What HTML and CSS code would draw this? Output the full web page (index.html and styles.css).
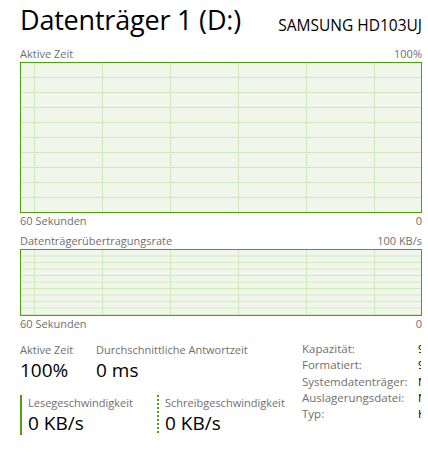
FILE: index.html
```html
<!DOCTYPE html>
<html lang="de">

<head>
    <meta charset="UTF-8">
    <meta name="viewport" content="width=device-width, initial-scale=1.0">
    <title>Datenträger 1 (D:)</title>

    <link rel="stylesheet" href="styles.css">
</head>

<body>
    <div class="disk-panel">
        <div class="header">
            <h1>Datenträger 1 (D:)</h1>
            <span class="model">SAMSUNG HD103UJ</span>
        </div>

        <div class="axis axis-top">
            <span>Aktive Zeit</span>
            <span>100%</span>
        </div>
        <div class="chart chart-active"></div>
        <div class="axis">
            <span>60 Sekunden</span>
            <span>0</span>
        </div>

        <div class="axis axis-top axis-rate">
            <span>Datenträgerübertragungsrate</span>
            <span>100 KB/s</span>
        </div>
        <div class="chart chart-rate"></div>
        <div class="axis">
            <span>60 Sekunden</span>
            <span>0</span>
        </div>

        <div class="stats">
            <div class="live">
                <div class="row">
                    <div class="stat stat-active">
                        <div class="label">Aktive Zeit</div>
                        <div class="value">100%</div>
                    </div>
                    <div class="stat">
                        <div class="label">Durchschnittliche Antwortzeit</div>
                        <div class="value">0 ms</div>
                    </div>
                </div>
                <div class="row">
                    <div class="stat stat-read">
                        <div class="label">Lesegeschwindigkeit</div>
                        <div class="value">0 KB/s</div>
                    </div>
                    <div class="stat stat-write">
                        <div class="label">Schreibgeschwindigkeit</div>
                        <div class="value">0 KB/s</div>
                    </div>
                </div>
            </div>

            <div class="props">
                <span class="prop-name">Kapazität:</span><span class="prop-value">931 GB</span>
                <span class="prop-name">Formatiert:</span><span class="prop-value">931 GB</span>
                <span class="prop-name">Systemdatenträger:</span><span class="prop-value">Nein</span>
                <span class="prop-name">Auslagerungsdatei:</span><span class="prop-value">Nein</span>
                <span class="prop-name">Typ:</span><span class="prop-value">HDD</span>
            </div>
        </div>
    </div>
</body>

</html>
```

FILE: styles.css
```css
html {
    height: 100%;
}

body {
    margin: 0;
    padding: 0;
    background: #fff;
    font-family: "Open Sans", "Noto Sans", sans-serif;
    color: #000;
    overflow: hidden;
}

.disk-panel {
    width: 402px;
    padding: 0 0 0 20px;
}

.header {
    display: flex;
    justify-content: space-between;
    align-items: baseline;
    height: 44px;
}

.header h1 {
    margin: 0;
    font-size: 27px;
    font-weight: 400;
    line-height: 40px;
    letter-spacing: -0.2px;
}

.model {
    font-size: 15.5px;
    position: relative;
    top: 1px;
}

.axis {
    display: flex;
    justify-content: space-between;
    font-size: 11px;
    line-height: 16px;
    color: #6f6f6f;
}

.axis-top {
    margin-top: 2px;
}

.axis-rate {
    margin-top: 4px;
}

.chart {
    box-sizing: border-box;
    border: 1px solid #4ba30c;
    background-color: #f0f7ea;
}

.chart-active {
    height: 151px;
    background-image:
        linear-gradient(90deg, transparent 13px, #d0e8bd 13px, #d0e8bd 14px, transparent 14px),
        linear-gradient(180deg, transparent 14px, #d0e8bd 14px);
    background-size: 68px 100%, 100% 15px;
    background-position: 0 0, 0 0;
}

.chart-rate {
    height: 67px;
    background-image:
        linear-gradient(90deg, transparent 13px, #d0e8bd 13px, #d0e8bd 14px, transparent 14px),
        linear-gradient(180deg, transparent calc(100% - 1px), #d0e8bd calc(100% - 1px));
    background-size: 68px 100%, 100% 10%;
    background-position: 0 0, 0 0;
}

.stats {
    display: flex;
    justify-content: space-between;
    align-items: flex-start;
    margin-top: 10px;
}

.live .row {
    display: flex;
}

.stat .label {
    font-size: 11px;
    line-height: 16px;
    color: #6f6f6f;
}

.stat .value {
    font-size: 19px;
    line-height: 24px;
}

.stat-active {
    width: 76px;
}

.live .row + .row {
    margin-top: 13px;
}

.stat-read,
.stat-write {
    padding: 0 0 0 6px;
}

.stat-read {
    width: 129px;
    border-left: 2px solid #4ba30c;
}

.stat-write {
    padding-left: 8px;
    background: linear-gradient(180deg, #4ba30c 2px, transparent 2px) 0 0 / 2px 4px repeat-y;
}

.props {
    display: grid;
    grid-template-columns: 116px 3px;
    font-size: 11.5px;
    line-height: 16.3px;
    margin-right: 1px;
    margin-top: -1px;
}

.prop-name {
    color: #6f6f6f;
    white-space: nowrap;
}

.prop-value {
    color: #000;
    overflow: hidden;
    white-space: nowrap;
}
```
